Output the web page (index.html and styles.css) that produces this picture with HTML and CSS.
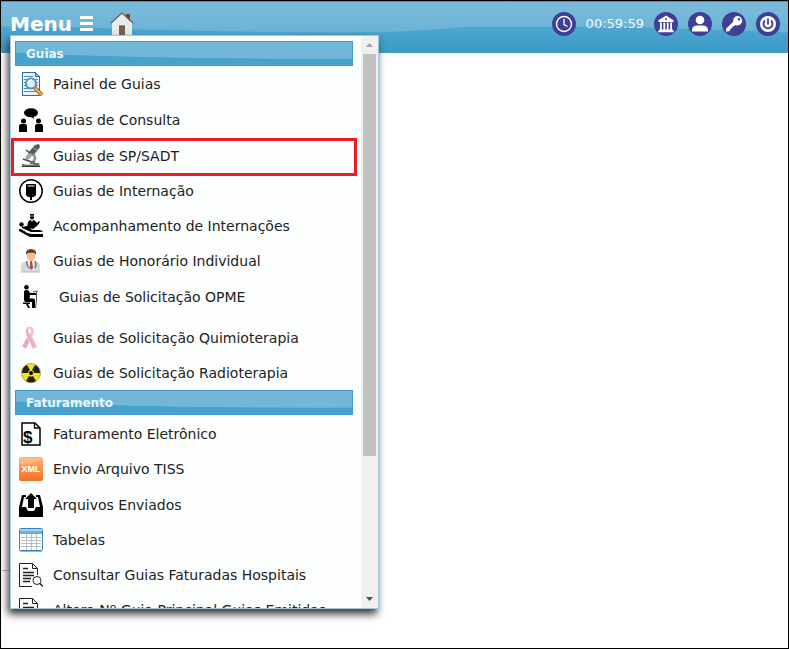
FILE: index.html
```
<!DOCTYPE html>
<html lang="pt-br">

<head>
    <meta charset="UTF-8">
    <meta name="viewport" content="width=device-width, initial-scale=1.0">
    <link rel="stylesheet" href="styles.css">
    <title>Menu</title>
</head>

<body>
    <header class="topo">
        <svg class="topo_brilho" viewBox="0 0 787 52" preserveAspectRatio="none" aria-hidden="true">
            <path d="M0 0H787V31Q690 27 600 25H470Q400 32 330 31Q170 30 90 26L0 25Z" fill="url(#brilho)" />
            <defs>
                <linearGradient id="brilho" x1="0" y1="0" x2="0" y2="1">
                    <stop offset="0" stop-color="#7cbbda" />
                    <stop offset="1" stop-color="#6ab3d5" />
                </linearGradient>
            </defs>
        </svg>
        <button class="botaoMenu" type="button">Menu
            <svg width="14" height="16" viewBox="0 0 14 16" fill="#fff" aria-hidden="true">
                <path d="M0 0h13v3H0zM0 6h13v3H0zM0 12h13v3H0z" />
            </svg>
        </button>
        <a class="botaoHome" href="#" aria-label="Início">
            <svg width="24" height="24" viewBox="0 0 24 24">
                <path d="M16 2h4v7h-4z" fill="#7a4326" />
                <path d="M12 1L2 11v13h20V11z" fill="#e6ebeb" />
                <path d="M1 11L12 1l11 10" fill="none" stroke="#6f665d" stroke-width="1.3" />
                <path d="M9 14h6v10H9z" fill="#79614d" />
                <path d="M9 14h6" stroke="#594433" />
            </svg>
        </a>
        <div class="topo_acoes">
            <button class="botaoRedondo" type="button" aria-label="Sessão">
                <svg viewBox="0 0 24 24" fill="none" stroke="#fff">
                    <circle cx="12" cy="12" r="7.5" stroke-width="1.4" />
                    <path d="M12 7v5.500l3.500 2" stroke-width="1.3" />
                </svg>
            </button>
            <span class="tempo">00:59:59</span>
            <button class="botaoRedondo" type="button" aria-label="Instituição">
                <svg viewBox="0 0 24 24" fill="#fff">
                    <path fill-rule="evenodd" d="M12 3.500L4.500 8.300V10h15V8.300zM12 6a1 1 0 1 1 0 2 1 1 0 0 1 0-2z" />
                    <path d="M6 10.500h1.800V18H6zM9.400 10.500h1.800V18H9.400zM12.800 10.500h1.800V18h-1.800zM16.200 10.500H18V18h-1.800zM5 17.500h14V19h1v1.200H4V19h1z" />
                </svg>
            </button>
            <button class="botaoRedondo" type="button" aria-label="Usuário">
                <svg viewBox="0 0 24 24" fill="#fff">
                    <circle cx="12" cy="8" r="4.300" />
                    <path d="M4 19.500v-1.500c0-3 2.500-4.500 5-4.500h6c2.500 0 5 1.500 5 4.500v1.500z" />
                </svg>
            </button>
            <button class="botaoRedondo" type="button" aria-label="Senha">
                <svg viewBox="0 0 24 24" fill="#fff">
                    <path fill-rule="evenodd" d="M15.500 4a4.700 4.700 0 0 1 0 9.400q-1.300 0-2.200-.5l-1.300 1.400-1.600.2-.2 1.800-1.700.2-.2 1.700-1.800 1.300H4v-2.700l7.200-7A4.700 4.700 0 0 1 15.500 4zM17 6a1.300 1.300 0 1 0 0 2.600A1.300 1.300 0 0 0 17 6z" />
                </svg>
            </button>
            <button class="botaoRedondo" type="button" aria-label="Sair">
                <svg viewBox="0 0 24 24">
                    <circle cx="12" cy="12" r="8" fill="#fff" />
                    <path d="M9 8.500a4.500 4.500 0 1 0 6 0" fill="none" stroke="#3e3f97" stroke-width="1.800" />
                    <path d="M12 6.500v6" stroke="#3e3f97" stroke-width="1.800" />
                </svg>
            </button>
        </div>
    </header>

    <nav class="menu">
        <div class="menu_conteudo">
            <h2 class="menu_titulo">Guias</h2>
            <ul class="menu_lista">
                <li class="item item-alto"><a href="#">
                    <svg viewBox="0 0 24 24">
                        <path d="M3.500.5h13l4 4v19h-17z" fill="#e8f3fb" stroke="#2d6c9d" />
                        <path d="M16.500.5v4h4z" fill="#8fbfe0" stroke="#2d6c9d" />
                        <path d="M5 4.500h9M5 7.500h14M5 10.500h14M5 13.500h14M5 16.500h14M5 19.500h12" stroke="#4d8fc2" />
                        <circle cx="12" cy="11.500" r="5" fill="#d9effa" stroke="#648cad" stroke-width="2" />
                        <path d="M9 11q1-3 4-3" stroke="#fff" stroke-width="1.500" fill="none" />
                        <path d="M16 16l7 7" stroke="#a86018" stroke-width="4" />
                        <path d="M16 16l7 7" stroke="#f2b04c" stroke-width="2" />
                    </svg>Painel de Guias</a></li>
                <li class="item item-alto"><a href="#">
                    <svg viewBox="0 0 24 24">
                        <ellipse cx="12" cy="4.700" rx="7" ry="4.500" />
                        <path d="M11 8l4 3-1-4z" />
                        <circle cx="4.500" cy="13" r="2.500" />
                        <circle cx="19.500" cy="13" r="2.500" />
                        <path d="M0 24v-6q0-2 2-2h4q2 0 2 2v6zM16 24v-6q0-2 2-2h4q2 0 2 2v6z" />
                    </svg>Guias de Consulta</a></li>
                <li class="item item-destaque"><a href="#">
                    <svg viewBox="0 0 24 24">
                        <path d="M16 1l4-1 1 3-7 9-5-3z" fill="#555b58" />
                        <path d="M14.500 4l4 2.700" stroke="#b5bab7" />
                        <path d="M10 8l-4 6 3 2 5-5z" fill="#a0a6a2" />
                        <path d="M7 6l4 3M4 15l9 3" stroke="#454947" stroke-width="1.500" />
                        <path d="M14 10q4 4 0 8" fill="none" stroke="#8b918d" stroke-width="2.500" />
                        <path d="M11 17h5v2h4l1 4H3v-3h8z" fill="#6d736f" />
                        <path d="M3 22.500h18" stroke="#333735" />
                        <path d="M5 20.500h9" stroke="#c4c8c5" />
                    </svg>Guias de SP/SADT</a></li>
                <li class="item"><a href="#">
                    <svg viewBox="0 0 24 24">
                        <circle cx="12" cy="12" r="11.200" fill="#fff" stroke="#000" stroke-width="1.500" />
                        <path d="M8 5h8q1 0 1 1v10l-2 2H9l-2-2V6q0-1 1-1z" />
                        <path d="M11 18h2v3h-2z" />
                        <path d="M8.500 7h7" stroke="#fff" />
                    </svg>Guias de Internação</a></li>
                <li class="item"><a href="#">
                    <svg viewBox="0 0 24 24">
                        <path d="M11 0h4v3.500q0 2-2 2t-2-2z" />
                        <path d="M11 2h4" stroke="#fff" stroke-width=".7" />
                        <path d="M9 8q1-2 3-2l1 2 1-2q2 0 3 2l1 1 2-2 1 1-3 4-4 3-6-2z" />
                        <circle cx="2.500" cy="10.500" r="2.200" />
                        <path d="M3 13l5-1q3 1 5 4h7q3 0 4 2H12l-9-4z" />
                        <path d="M0 15q4 0 8 4l5 1h11v3H11L0 17z" />
                        <path d="M4 16l9 3.500h9" stroke="#fff" stroke-width=".8" fill="none" />
                    </svg>Acompanhamento de Internações</a></li>
                <li class="item item-alto"><a href="#">
                    <svg viewBox="0 0 24 24">
                        <path d="M2 23v-6q0-4 6-5h8q5 1 5 5v6z" fill="#d4d9dc" />
                        <path d="M2 23h19" stroke="#b4babd" />
                        <path d="M9 12l3 9 3-9z" fill="#fff" />
                        <path d="M11 12h2l1 7-2 2-1-2z" fill="#bd4b45" />
                        <path d="M8 12q-1 5 3 7M16 12q2 3 0 7" stroke="#54718b" fill="none" stroke-width="1.300" />
                        <ellipse cx="12" cy="6.500" rx="4.200" ry="5.500" fill="#f1bd91" />
                        <path d="M7 6q-1-6 5-6t5 6q-1-3-5-2-4-1-5 2z" fill="#6b3f28" />
                    </svg>Guias de Honorário Individual</a></li>
                <li class="item item-opme"><a href="#">
                    <svg viewBox="0 0 24 24">
                        <circle cx="7.500" cy="2.300" r="2.300" />
                        <path d="M5 6q3-2 5 0l1 2h6v2h-6l-.5 3.500H14q2 0 2 2V23h-3v-6H7q-2 0-2-2z" />
                        <path d="M4 17.500h7v1.500H9l2 4H9l-2-4H4z" />
                        <path d="M14 7l5-1M17.500 7v8l-1 8" stroke="#555" fill="none" />
                    </svg>Guias de Solicitação OPME</a></li>
                <li class="item"><a href="#">
                    <svg viewBox="0 0 24 24">
                        <path d="M10 1q6 0 4 7L7 23l-4-3L9 10Q5 2 10 1z" fill="#e7a9bf" />
                        <path d="M7 4q1-4 4-3 4 1 3 7l-1 2 5 11-4 2L7 9z" fill="#f2bdcf" />
                        <ellipse cx="10.500" cy="5" rx="1.500" ry="2.500" fill="#fff" />
                        <path d="M8 3q0 5 3 9l4 9" fill="none" stroke="#d890aa" stroke-width=".8" />
                    </svg>Guias de Solicitação Quimioterapia</a></li>
                <li class="item"><a href="#">
                    <svg viewBox="0 0 24 24">
                        <circle cx="12" cy="12" r="9.500" fill="#f3e129" stroke="#b5aa3b" />
                        <circle cx="12" cy="12" r="2" />
                        <path d="M10 9L7 4q5-3 10 0l-3 5q-2-1-4 0zM9 12H3q0 6 5 8l3-5q-2-1-2-3zM15 12h6q0 6-5 8l-3-5q2-1 2-3z" fill="#222317" transform="rotate(180 12 12)" />
                    </svg>Guias de Solicitação Radioterapia</a></li>
            </ul>
            <h2 class="menu_titulo">Faturamento</h2>
            <ul class="menu_lista menu_lista-faturamento">
                <li class="item"><a href="#">
                    <svg viewBox="0 0 24 24">
                        <path d="M3 1h13l5 5v17H3z" fill="#fff" stroke="#000" stroke-width="1.500" />
                        <path d="M15.500 1v5H21" fill="none" stroke="#000" stroke-width="1.300" />
                        <text class="icone_cifrao" x="4" y="21">$</text>
                    </svg>Faturamento Eletrônico</a></li>
                <li class="item item-alto"><a href="#">
                    <svg viewBox="0 0 24 24">
                        <defs>
                            <linearGradient id="laranja" x1="0" y1="0" x2="0" y2="1">
                                <stop offset="0" stop-color="#ffb17c" />
                                <stop offset="1" stop-color="#f6701f" />
                            </linearGradient>
                        </defs>
                        <rect width="24" height="24" rx="2" fill="url(#laranja)" />
                        <path d="M1 7Q14 8 23 2V1H1z" fill="#ffc39a" opacity=".6" />
                        <text class="icone_xml" x="12" y="15">XML</text>
                    </svg>Envio Arquivo TISS</a></li>
                <li class="item"><a href="#">
                    <svg viewBox="0 0 24 24">
                        <path d="M3 2h4v2H5L3 14h4l2 4h6l2-4h4L19 4h-2V2h4l3 12v10H0V14z" />
                        <path d="M12 0l6 6h-3v9H9V6H6z" />
                    </svg>Arquivos Enviados</a></li>
                <li class="item"><a href="#">
                    <svg viewBox="0 0 24 24">
                        <rect x=".5" y=".5" width="23" height="22" rx="1" fill="#fff" stroke="#3b82bd" />
                        <path d="M1 1h22v5H1z" fill="#65b1e2" />
                        <path d="M1 1h22v2H1z" fill="#a5d5f3" />
                        <path d="M2 9.500h20M2 12.500h20M2 15.500h20M2 18.500h20M7.500 6v16M12.500 6v16M17.500 6v16" stroke="#b9bdc0" />
                        <path d="M1 23h22" stroke="#2d77b6" />
                    </svg>Tabelas</a></li>
                <li class="item"><a href="#">
                    <svg viewBox="0 0 24 24" fill="none" stroke="#222">
                        <path d="M13 23.500H.5V.5h13l5 5V12M13.500.5v5h5" />
                        <path d="M4 5.500h5M4 9.500h11M4 12.500h11M4 15.500h8M4 18.500h7" stroke-width="1.300" />
                        <circle cx="18" cy="17.500" r="4" />
                        <path d="M21 20.500l3 3" stroke-width="1.500" />
                    </svg>Consultar Guias Faturadas Hospitais</a></li>
                <li class="item"><a href="#">
                    <svg viewBox="0 0 24 24" fill="none" stroke="#222">
                        <path d="M13 23.500H.5V.5h13l5 5V12M13.500.5v5h5" />
                        <path d="M4 5.500h5M4 9.500h11M4 12.500h11M4 15.500h8M4 18.500h7" stroke-width="1.300" />
                        <circle cx="18" cy="17.500" r="4" />
                        <path d="M21 20.500l3 3" stroke-width="1.500" />
                    </svg>Altera Nº Guia Principal Guias Emitidas</a></li>
            </ul>
        </div>
        <div class="rolagem">
            <button type="button" class="rolagem_seta" aria-label="Rolar para cima">
                <svg width="7" height="4" viewBox="0 0 7 4"><path d="M0 4l3.500-4L7 4z" fill="#a3a3a3" /></svg>
            </button>
            <div class="rolagem_trilho">
                <div class="rolagem_barra"></div>
            </div>
            <button type="button" class="rolagem_seta" aria-label="Rolar para baixo">
                <svg width="7" height="4" viewBox="0 0 7 4"><path d="M0 0l3.500 4L7 0z" fill="#505050" /></svg>
            </button>
        </div>
    </nav>

    <main class="pagina">
        <hr class="pagina_linha">
    </main>
</body>

</html>
```

FILE: styles.css
```
* {
    box-sizing: border-box;
}

body,
h2,
ul {
    margin: 0;
    padding: 0;
}

body {
    display: flex;
    flex-direction: column;
    position: relative;
    height: 100vh;
    border: 1px solid #000;
    background-color: #fff;
    font-family: 'DejaVu Sans', Verdana, sans-serif;
    overflow: hidden;
}

button {
    border: none;
    padding: 0;
    background: none;
    font-family: inherit;
    cursor: pointer;
}

/* Topo */
.topo {
    position: relative;
    display: flex;
    align-items: center;
    height: 52px;
    padding: 0 8px 8px 9px;
    background: linear-gradient(#56abd1 30%, #3a9ac7);
    border-top: 1px solid #3f94c8;
}

.topo_brilho {
    position: absolute;
    top: 0;
    left: 0;
    width: 100%;
    height: 100%;
}

.botaoMenu,
.botaoHome,
.topo_acoes {
    display: flex;
    align-items: center;
    position: relative;
}

.botaoMenu {
    gap: 8px;
    color: #fff;
    font-size: 20px;
    font-weight: bold;
}

.botaoHome {
    margin-left: 16px;
}

.topo_acoes {
    gap: 10px;
    margin-left: auto;
}

.botaoRedondo {
    width: 24px;
    height: 24px;
    border-radius: 50%;
    background-color: #3e3f97;
}

.botaoRedondo svg {
    display: block;
}

.tempo {
    color: #eef8fc;
    font-size: 13px;
}

/* Menu suspenso */
.menu {
    position: absolute;
    top: 34px;
    left: 9px;
    display: flex;
    width: 369px;
    height: calc(100vh - 75px);
    border: 1px solid #a3c8e2;
    background-color: #fcfefe;
    box-shadow: -2px 5px 8px #333;
}

.menu_conteudo {
    flex: 1;
    padding: 5px 8px 0 4px;
    overflow: hidden;
}

.menu_titulo {
    height: 25px;
    padding-left: 10px;
    border: 1px solid #4297cf;
    background: radial-gradient(ellipse 400px 17px at 90% 0, #72b7d8 96%, #47a3cc 100%);
    color: #e9f6fb;
    font-size: 12px;
    line-height: 24px;
}

.menu_lista {
    list-style: none;
}

.menu_lista-faturamento {
    padding-top: 1px;
}

.item {
    position: relative;
    height: 35px;
    padding-left: 4px;
}

.item-alto {
    height: 36px;
}

.item a {
    display: flex;
    align-items: center;
    gap: 10px;
    height: 35px;
    color: #222;
    font-size: 14px;
    text-decoration: none;
    white-space: nowrap;
}

.item svg {
    flex: none;
    width: 24px;
    height: 24px;
}

.item-opme {
    height: 41px;
}

.item-opme a {
    gap: 16px;
}

.item-destaque::after {
    content: '';
    position: absolute;
    inset: 0 -4px -3px;
    border: 3px solid #ec1c24;
    pointer-events: none;
}

.icone_cifrao {
    font-size: 17px;
    font-weight: bold;
    font-family: 'Liberation Sans', sans-serif;
}

.icone_xml {
    fill: #fff;
    font-size: 9px;
    font-weight: bold;
    font-family: 'Liberation Sans', sans-serif;
    text-anchor: middle;
}

/* Barra de rolagem */
.rolagem {
    display: flex;
    flex-direction: column;
    width: 17px;
    background-color: #f0f0f0;
}

.rolagem_seta {
    display: flex;
    align-items: center;
    justify-content: center;
    height: 18px;
}

.rolagem_trilho {
    flex: 1;
    padding: 0 2px;
}

.rolagem_barra {
    height: 75%;
    background-color: #c1c1c1;
}

/* Página */
.pagina {
    display: flex;
    flex: 1;
    align-items: flex-end;
}

.pagina_linha {
    width: 16px;
    margin: 0 0 77px;
    border: none;
    border-top: 1px solid #bbb;
}
```
